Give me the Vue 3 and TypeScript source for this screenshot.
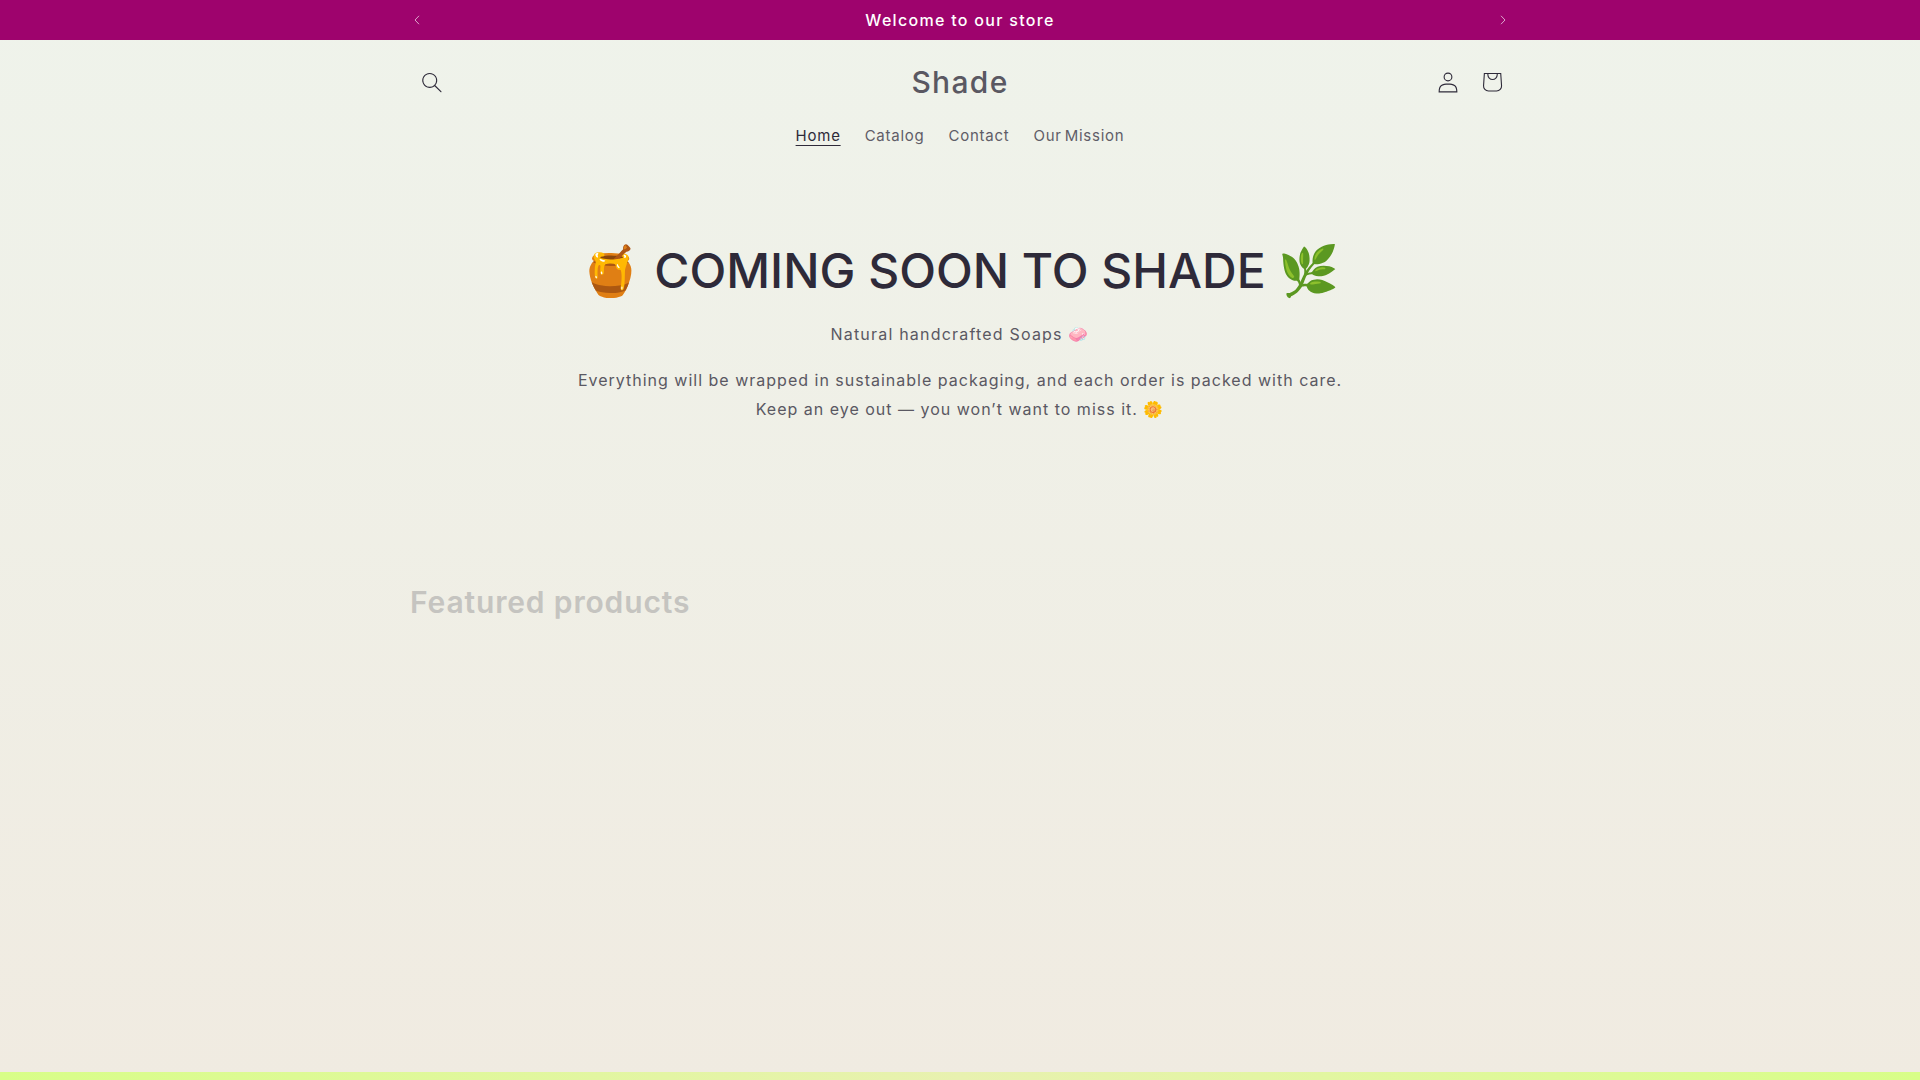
<script setup lang="ts">
const navLinks: string[] = ['Home', 'Catalog', 'Contact', 'Our Mission']
</script>

<template>
  <div class="page">
    <div class="announcement">
      <div class="announcement-inner">
        <svg class="arrow" viewBox="0 0 6 10" width="6" height="10"><path d="M5 .8 1 5l4 4.2" fill="none" stroke="currentColor" /></svg>
        <span class="announcement-text">Welcome to our store</span>
        <svg class="arrow" viewBox="0 0 6 10" width="6" height="10"><path d="M1 .8 5 5 1 9.2" fill="none" stroke="currentColor" /></svg>
      </div>
    </div>

    <header class="header">
      <div class="header-top">
        <div class="icon-button">
          <svg viewBox="0 0 18 19" width="20" height="21"><path fill-rule="evenodd" clip-rule="evenodd" d="M11.03 11.68A5.784 5.784 0 112.85 3.5a5.784 5.784 0 018.18 8.18zm.26 1.12a6.78 6.78 0 11.72-.7l5.4 5.4a.5.5 0 11-.71.7l-5.41-5.4z" fill="currentColor" /></svg>
        </div>
        <div class="brand">Shade</div>
        <div class="header-icons">
          <div class="icon-button">
            <svg viewBox="0 0 18 19" width="20" height="21"><path fill-rule="evenodd" clip-rule="evenodd" d="M6 4.5a3 3 0 116 0 3 3 0 01-6 0zm3-4a4 4 0 100 8 4 4 0 000-8zm5.58 12.15c1.12.82 1.83 2.24 1.91 4.85H1.51c.08-2.6.79-4.03 1.9-4.85C4.66 11.75 6.5 11.5 9 11.5s4.35.26 5.58 1.15zM9 10.5c-2.5 0-4.65.24-6.17 1.35C1.27 12.98.5 14.93.5 18v.5h17V18c0-3.07-.77-5.02-2.33-6.15-1.52-1.1-3.67-1.35-6.17-1.35z" fill="currentColor" /></svg>
          </div>
          <div class="icon-button">
            <svg viewBox="0 0 40 40" width="44" height="44"><path d="m15.75 11.8h-3.16l-.77 11.6a5 5 0 0 0 4.99 5.34h7.38a5 5 0 0 0 4.99-5.33l-.78-11.61zm0 1h-2.22l-.71 10.67a4 4 0 0 0 3.99 4.27h7.38a4 4 0 0 0 4-4.27l-.72-10.67h-2.22v.63a4.75 4.75 0 1 1 -9.5 0zm8.5 0h-7.5v.63a3.75 3.75 0 1 0 7.5 0z" fill="currentColor" fill-rule="evenodd" /></svg>
          </div>
        </div>
      </div>
      <nav class="nav">
        <a v-for="(link, i) in navLinks" :key="link" class="nav-link" :class="{ active: i === 0 }">{{ link }}</a>
      </nav>
    </header>

    <main class="main">
      <section class="intro">
        <h1 class="intro-title"><span class="emoji">🍯</span> COMING SOON TO SHADE <span class="emoji">🌿</span></h1>
        <p class="intro-sub">Natural handcrafted Soaps 🧼</p>
        <p class="intro-body">Everything will be wrapped in sustainable packaging, and each order is packed with care.<br />Keep an eye out — you won’t want to miss it. 🌼</p>
      </section>
      <section class="featured">
        <h2 class="featured-title">Featured products</h2>
      </section>
    </main>

    <div class="footer-strip"></div>
  </div>
</template>

<style>
html, body { margin: 0; padding: 0; }
</style>

<style scoped>
.page {
  height: 1080px;
  overflow: hidden;
  display: flex;
  flex-direction: column;
  background: linear-gradient(180deg, #eff3eb 0%, #f0ebe1 100%);
  font-family: Inter, "Noto Color Emoji", "Noto Sans", sans-serif;
  color: #5a5862;
}
.announcement { background: #9e036d; color: #fff; height: 40px; flex: none; }
.announcement-inner {
  width: 1100px;
  height: 40px;
  margin: 0 auto;
  display: flex;
  align-items: center;
  justify-content: space-between;
  padding: 0 4px 1px 4px;
  box-sizing: border-box;
}
.arrow { opacity: 0.65; margin-top: 1px; }
.announcement-text { font-size: 16px; font-weight: 500; letter-spacing: 1.3px; }
.header { width: 1100px; margin: 0 auto; flex: none; }
.header-top {
  display: flex;
  align-items: center;
  justify-content: space-between;
  height: 44px;
  padding-top: 20px;
  position: relative;
}
.icon-button {
  width: 44px;
  height: 44px;
  display: flex;
  align-items: center;
  justify-content: center;
  color: #2e2a39;
}
.header-icons { display: flex; margin-right: -4px; }
.brand {
  position: absolute;
  left: 0;
  right: 0;
  text-align: center;
  font-size: 30px;
  font-weight: 500;
  letter-spacing: 1.3px;
  color: #5a5862;
}
.nav {
  display: flex;
  justify-content: center;
  gap: 24px;
  margin-top: 20px;
  font-size: 15px;
  letter-spacing: 0.75px;
  word-spacing: -2px;
  line-height: 24px;
}
.nav-link { color: #5f5d67; }
.nav-link.active { color: #2e2a39; text-decoration: underline; text-underline-offset: 4px; text-decoration-thickness: 1px; }
.main { flex: 1; width: 1100px; margin: 0 auto; }
.intro { text-align: center; padding-top: 89px; }
.intro-title {
  margin: 0;
  font-size: 48px;
  font-weight: 500;
  line-height: 68px;
  color: #2e2a39;
  white-space: nowrap;
}
.emoji { font-size: 49px; }
.intro-sub {
  margin: 15px 0 0;
  font-size: 16px;
  line-height: 29px;
  letter-spacing: 1.2px;
}
.intro-body {
  margin: 17px 0 0;
  font-size: 16px;
  line-height: 29px;
  letter-spacing: 1px;
}
.featured { margin-top: 158px; }
.featured-title {
  margin: 0;
  font-size: 30px;
  font-weight: 600;
  line-height: 40px;
  letter-spacing: 0.85px;
  color: #c5c4c0;
}
.footer-strip {
  height: 8px;
  flex: none;
  background: linear-gradient(90deg, #d8fe88 0%, #e8f1b0 50%, #d8fe88 100%);
}
</style>
